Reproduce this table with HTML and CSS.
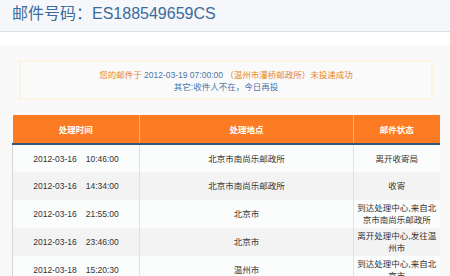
FILE: index.html
```html
<!DOCTYPE html>
<html lang="zh-CN">
<head>
<meta charset="utf-8">
<title>邮件查询</title>
<link rel="stylesheet" href="styles.css">
</head>
<body>
<div class="header">
  <h1 class="title">邮件号码：ES188549659CS</h1>
</div>
<div class="main">
  <div class="notice">
    <p class="line1">您的邮件于 <span class="blue">2012-03-19 07:00:00</span> （温州市灌桥邮政所）未投递成功</p>
    <p class="line2">其它:收件人不在，今日再投</p>
  </div>
  <table class="track">
    <colgroup>
      <col class="c1"><col class="c2"><col class="c3">
    </colgroup>
    <thead>
      <tr><th>处理时间</th><th>处理地点</th><th>邮件状态</th></tr>
    </thead>
    <tbody>
      <tr><td><span>2012-03-16</span><span class="tm">10:46:00</span></td><td>北京市南尚乐邮政所</td><td>离开收寄局</td></tr>
      <tr class="alt"><td><span>2012-03-16</span><span class="tm">14:34:00</span></td><td>北京市南尚乐邮政所</td><td>收寄</td></tr>
      <tr><td><span>2012-03-16</span><span class="tm">21:55:00</span></td><td>北京市</td><td>到达处理中心,来自北<br>京市南尚乐邮政所</td></tr>
      <tr class="alt"><td><span>2012-03-16</span><span class="tm">23:46:00</span></td><td>北京市</td><td>离开处理中心,发往温<br>州市</td></tr>
      <tr><td><span>2012-03-18</span><span class="tm">15:20:30</span></td><td>温州市</td><td>到达处理中心,来自北<br>京市</td></tr>
    </tbody>
  </table>
</div>
</body>
</html>
```

FILE: styles.css
```css
html, body {
  margin: 0;
  padding: 0;
  overflow: hidden;
  background: #ffffff;
  font-family: "Liberation Sans", "Noto Sans CJK SC", sans-serif;
}

.header {
  box-sizing: border-box;
  height: 32px;
  padding: 3px 0 0 12px;
  background: #f5f7fa;
  border-bottom: 1px solid #dce1e7;
}

.title {
  margin: 0;
  font-size: 16px;
  line-height: 22px;
  font-weight: normal;
  color: #3b6b9c;
  font-family: "Liberation Sans", "Noto Sans CJK SC", sans-serif;
}

.main {
  margin-top: 13px;
  background: #f9f9f9;
  padding: 15px 0 20px 0;
  min-height: 240px;
}

.notice {
  box-sizing: border-box;
  width: 414px;
  height: 40px;
  margin-left: 19px;
  border: 2px solid #fdf3e4;
  background: #fafafa;
  padding: 7px 0 5px;
  text-align: center;
  font-size: 8.5px;
  line-height: 12px;
}

.notice p {
  margin: 0;
}

.line1 {
  color: #e5862c;
}

.blue,
.line2 {
  color: #4a76a6;
}

.track {
  margin: 15px 0 0 12px;
  width: 427px;
  border-collapse: collapse;
  table-layout: fixed;
  font-size: 8.5px;
  color: #333333;
}

.c1 { width: 127px; }
.c2 { width: 214px; }
.c3 { width: 86px; }

.track th {
  height: 28px;
  padding: 0;
  background: #fd7b22;
  color: #ffffff;
  font-weight: bold;
  text-align: center;
  border-left: 1px solid #fcae7a;
  border-bottom: 2px solid #34587b;
}

.track th:first-child {
  border-left: none;
}

.track td {
  height: 28px;
  box-sizing: border-box;
  padding: 1px 2px;
  line-height: 12px;
  text-align: center;
  vertical-align: middle;
  background: #fbfcfc;
  border-left: 1px solid #e2e2e2;
}

.track td:first-child {
  border-left: 1px solid #d6d6d6;
}

.track tr.alt td {
  background: #f3f3f3;
}

.tm {
  margin-left: 9px;
}
```
